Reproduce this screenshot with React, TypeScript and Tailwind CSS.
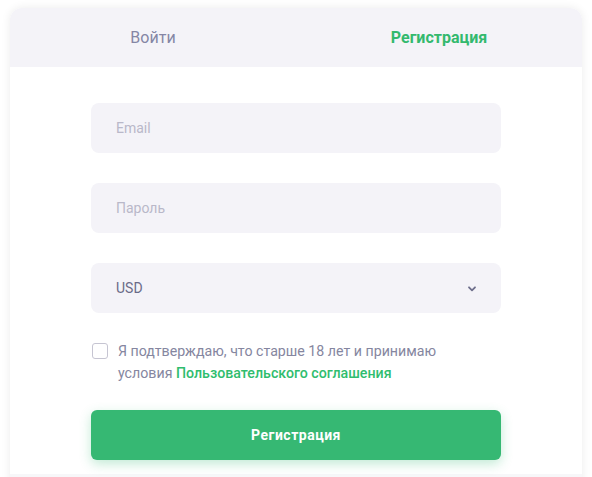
import * as React from 'react'
import { useState } from 'react'

export default function App() {
  const [tab, setTab] = useState<'login' | 'register'>('register')
  const [agree, setAgree] = useState(false)

  return (
    <div className="min-h-screen bg-white px-[10px] pt-[8px] font-['Roboto',sans-serif] overflow-hidden h-[477px]">
      <div className="rounded-t-[12px] bg-white shadow-[0_0_10px_rgba(0,0,0,0.08)] overflow-hidden">
        <div className="flex h-[59px] bg-[#f4f3f8]">
          <button
            onClick={() => setTab('login')}
            className={`flex-1 text-[16px] ${tab === 'login' ? 'text-[#33b96e] font-bold' : 'text-[#8586a5]'}`}
          >
            Войти
          </button>
          <button
            onClick={() => setTab('register')}
            className={`flex-1 text-[16px] ${tab === 'register' ? 'text-[#33b96e] font-bold' : 'text-[#8586a5]'}`}
          >
            Регистрация
          </button>
        </div>

        <form className="px-[81px] pt-[36px] pb-[14px] flex flex-col" onSubmit={(e) => e.preventDefault()}>
          <input
            type="email"
            placeholder="Email"
            className="h-[50px] rounded-[8px] bg-[#f4f3f8] px-[25px] text-[14px] text-[#6b6b88] placeholder-[#b9b8c9] outline-none"
          />
          <input
            type="password"
            placeholder="Пароль"
            className="mt-[30px] h-[50px] rounded-[8px] bg-[#f4f3f8] px-[25px] text-[14px] text-[#6b6b88] placeholder-[#b9b8c9] outline-none"
          />
          <div className="mt-[30px] h-[50px] rounded-[8px] bg-[#f4f3f8] px-[25px] flex items-center justify-between">
            <span className="text-[14px] text-[#6b6b88]">USD</span>
            <svg width="10" height="6" viewBox="0 0 10 6" className="mr-[-1px] mt-[2px]">
              <path d="M2 1.3 5 4.3 8 1.3" fill="none" stroke="#6e6f8c" strokeWidth="1.8" strokeLinecap="round" strokeLinejoin="round" />
            </svg>
          </div>

          <label className="mt-[27px] flex items-start gap-[10px] cursor-pointer">
            <span
              onClick={() => setAgree(!agree)}
              className={`mt-[3px] ml-[1px] h-[16px] w-[16px] shrink-0 rounded-[3px] border ${agree ? 'border-[#33b96e] bg-[#33b96e]' : 'border-[#c6c5d2] bg-white'}`}
            />
            <span className="text-[14.2px] leading-[22px] text-[#8586a0]">
              Я подтверждаю, что старше 18 лет и принимаю
              <br />
              условия <span className="text-[#2fbd6e] font-medium">Пользовательского соглашения</span>
            </span>
          </label>

          <button
            type="submit"
            className="mt-[26px] h-[50px] rounded-[6px] bg-[#36b873] text-white text-[14px] font-bold tracking-[0.5px] shadow-[0_4px_12px_rgba(54,184,115,0.3)]"
          >
            Регистрация
          </button>
        </form>
        <div className="h-[20px] bg-[#f7f7f9]" />
      </div>
    </div>
  )
}
